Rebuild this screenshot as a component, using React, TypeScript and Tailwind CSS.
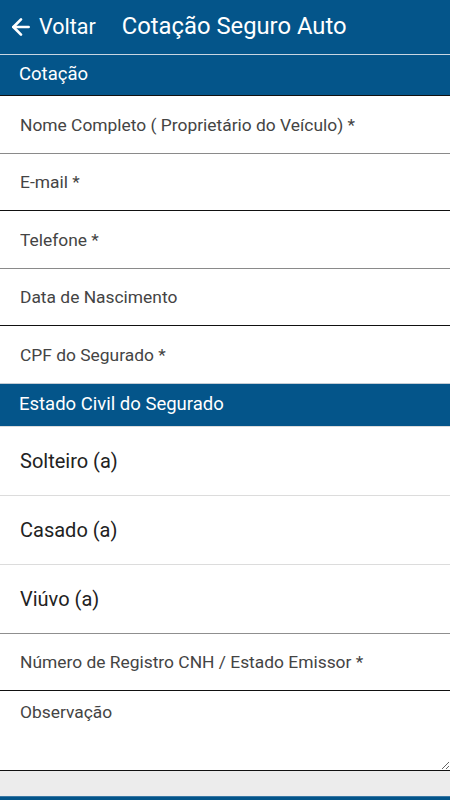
import { ArrowLeft } from 'lucide-react';

const FONT = { fontFamily: 'Roboto, "Noto Sans", Arial, sans-serif' };

type Field = { label: string; h: string; border: string };

const firstFields: Field[] = [
  { label: 'Nome Completo ( Proprietário do Veículo) *', h: 'h-[58px]', border: 'border-[#8a8a8a]' },
  { label: 'E-mail *', h: 'h-[57px]', border: 'border-[#111]' },
  { label: 'Telefone *', h: 'h-[58px]', border: 'border-[#8a8a8a]' },
  { label: 'Data de Nascimento', h: 'h-[57px]', border: 'border-[#111]' },
];

const estados = [
  { label: 'Solteiro (a)', border: 'border-[#dcdcdc]' },
  { label: 'Casado (a)', border: 'border-[#dcdcdc]' },
  { label: 'Viúvo (a)', border: 'border-[#8f8f8f]' },
];

export default function App() {
  return (
    <div className="w-[450px] h-[800px] flex flex-col bg-white overflow-hidden" style={FONT}>
      {/* Top bar */}
      <div className="h-[55px] flex-shrink-0 flex items-center bg-[#04558a] border-b border-[#c9d6e2] text-white">
        <button className="flex items-center gap-[5px] pl-[8px] pr-[26px]">
          <ArrowLeft size={26} strokeWidth={2.5} />
          <span className="text-[21.5px]">Voltar</span>
        </button>
        <h1 className="text-[23.8px]">Cotação Seguro Auto</h1>
      </div>

      {/* Section: Cotação */}
      <div className="h-[41px] flex-shrink-0 flex items-center px-[19px] bg-[#04558a] border-b border-[#111] text-white text-[18.5px]">
        Cotação
      </div>

      {firstFields.map(f => (
        <input
          key={f.label}
          placeholder={f.label}
          className={`${f.h} flex-shrink-0 w-full px-[20px] text-[17.4px] bg-white border-b ${f.border} outline-none placeholder:text-[#444]`}
        />
      ))}
      <input
        placeholder="CPF do Segurado *"
        className="h-[57px] flex-shrink-0 w-full px-[20px] text-[17.4px] bg-white outline-none placeholder:text-[#444]"
      />

      {/* Section: Estado civil */}
      <div className="h-[44px] flex-shrink-0 flex items-center px-[19px] bg-[#04558a] border-t border-b border-t-[#c4ccd4] border-b-[#dcdcdc] text-white text-[18.5px]">
        Estado Civil do Segurado
      </div>

      {estados.map(e => (
        <label
          key={e.label}
          className={`h-[69px] flex-shrink-0 flex items-center px-[20px] text-[20px] text-[#222] border-b ${e.border}`}
        >
          {e.label}
        </label>
      ))}

      <input
        placeholder="Número de Registro CNH / Estado Emissor *"
        className="h-[57px] flex-shrink-0 w-full px-[20px] text-[17.4px] bg-white border-b border-[#111] outline-none placeholder:text-[#444]"
      />
      <textarea
        placeholder="Observação"
        className="h-[80px] flex-shrink-0 w-full px-[20px] pt-[8px] text-[17.4px] bg-white border-b border-[#111] outline-none placeholder:text-[#444]"
      />

      {/* Footer */}
      <div className="h-[25px] flex-shrink-0 bg-[#ececec]" />
      <div className="flex-1 bg-[#04558a] border-t border-[#3a78a4]" />
    </div>
  );
}
